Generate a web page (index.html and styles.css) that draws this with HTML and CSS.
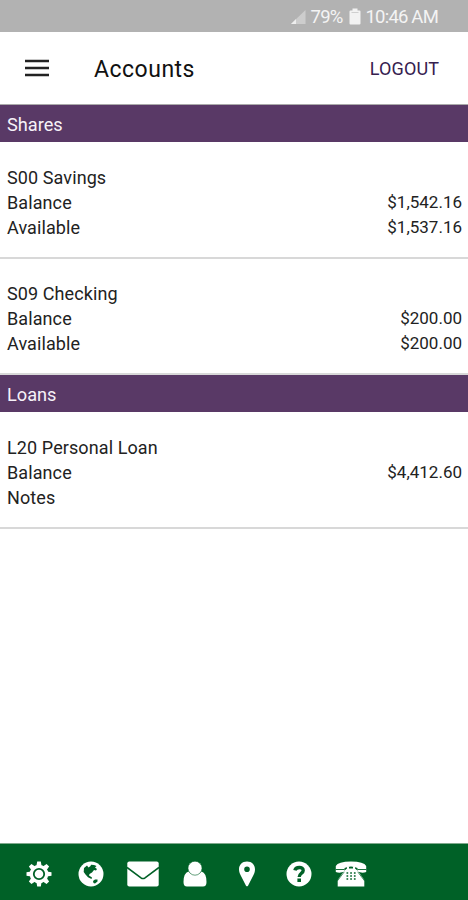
FILE: index.html
```
<!DOCTYPE html>
<html lang="en">
<head>
    <meta charset="utf-8">
    <title>Accounts</title>
    <link rel="stylesheet" href="styles.css">
</head>
<body>
    <div class="app">
        <div class="status-bar">
            <svg class="signal" width="17" height="16" viewBox="0 0 17 16">
                <path d="M1 15 L15.500 1 V15 Z" fill="#cdcdcd"/>
                <path d="M1 15 L6 10 V15 Z" fill="#eee"/>
            </svg>
            <span class="percent">79%</span>
            <svg class="battery" width="12" height="17" viewBox="0 0 12 17">
                <path d="M3.500 0.500 h5 v2 h2 q1 0 1 1 V15.500 q0 1 -1 1 H1.500 q-1 0 -1 -1 V3.500 q0 -1 1 -1 h2 Z" fill="#f2f2f2"/>
                <path d="M2.500 4.500 h7" stroke="#cfcfcf"/>
            </svg>
            <span class="time">10:46 AM</span>
        </div>

        <header class="header">
            <button class="menu-btn" aria-label="Menu">
                <svg width="24" height="18" viewBox="0 0 24 18">
                    <path d="M0 2 H24 M0 9 H24 M0 16 H24" stroke="#222" stroke-width="2.300"/>
                </svg>
            </button>
            <h1 class="title">Accounts</h1>
            <button class="logout-btn">LOGOUT</button>
        </header>

        <main class="content">
            <h2 class="section-title">Shares</h2>
            <div class="account">
                <div class="row"><span class="name">S00 Savings</span></div>
                <div class="row"><span class="balance">Balance</span><span class="amount">$1,542.16</span></div>
                <div class="row"><span class="available">Available</span><span class="amount">$1,537.16</span></div>
            </div>
            <div class="account">
                <div class="row"><span class="name">S09 Checking</span></div>
                <div class="row"><span class="balance">Balance</span><span class="amount">$200.00</span></div>
                <div class="row"><span class="available">Available</span><span class="amount">$200.00</span></div>
            </div>

            <h2 class="section-title">Loans</h2>
            <div class="account">
                <div class="row"><span class="name">L20 Personal Loan</span></div>
                <div class="row"><span class="balance">Balance</span><span class="amount">$4,412.60</span></div>
                <div class="row"><span class="notes">Notes</span></div>
            </div>
        </main>

        <nav class="toolbar">
            <!-- Settings -->
            <a class="tool">
                <svg width="26" height="26" viewBox="0 0 26 26">
                    <g fill="#fff">
                        <circle cx="13" cy="13" r="9.300"/>
                        <path id="tooth" d="M10.400 5 L11.200 0.500 H14.800 L15.600 5 Z M10.400 21 L11.200 25.500 H14.800 L15.600 21 Z"/>
                        <use href="#tooth" transform="rotate(45 13 13)"/>
                        <use href="#tooth" transform="rotate(90 13 13)"/>
                        <use href="#tooth" transform="rotate(135 13 13)"/>
                    </g>
                    <circle cx="13" cy="13" r="5.200" fill="none" stroke="#006127" stroke-width="1.800"/>
                </svg>
            </a>
            <!-- Globe -->
            <a class="tool">
                <svg width="26" height="26" viewBox="0 0 26 26">
                    <circle cx="13" cy="13" r="12.500" fill="#fff"/>
                    <path d="M6 7 L9 4.500 L10.500 6.500 L12.500 5 L13 3.700 L16 4 L18.500 5 L17 6.500 L19 8 L18 9.500 L16 9 L14 11.500 L11.500 13 L11 14.500 L14 16.500 L13.500 18 L10 16.300 L7.500 13.500 L5.700 11 Z" fill="#006127"/>
                    <path d="M15 20 L17 18.500 L19.500 18.500 L19.500 20.500 L17 22.500 L15.500 22 Z" fill="#006127"/>
                </svg>
            </a>
            <!-- Messages -->
            <a class="tool">
                <svg width="32" height="26" viewBox="0 0 32 26">
                    <rect x="0.300" y="0.500" width="31.400" height="25" rx="2" fill="#fff"/>
                    <path d="M0 6.500 L14 16.800 Q16 18.200 18 16.800 L32 6.500" fill="none" stroke="#006127" stroke-width="1.600"/>
                </svg>
            </a>
            <!-- Profile -->
            <a class="tool">
                <svg width="24" height="26" viewBox="0 0 24 26">
                    <path d="M5.500 10.500 Q0.500 12 0.500 21 Q0.500 25.500 4 25.500 H20 Q23.500 25.500 23.500 21 Q23.500 12 18.500 10.500 Q12 17 5.500 10.500 Z" fill="#fff"/>
                    <circle cx="12" cy="7.200" r="7" fill="#fff" stroke="#006127" stroke-width="0.600"/>
                </svg>
            </a>
            <!-- Locations -->
            <a class="tool">
                <svg width="18" height="26" viewBox="0 0 18 26">
                    <path fill-rule="evenodd" d="M9 0.500 C4 0.500 1 4 1 8.500 C1 11 2 13 3 15 L8 24.700 Q9 26 10 24.700 L15 15 C16 13 17 11 17 8.500 C17 4 14 0.500 9 0.500 Z M9 5.400 A2.800 2.800 0 1 1 9 11 A2.800 2.800 0 1 1 9 5.400 Z" fill="#fff"/>
                </svg>
            </a>
            <!-- Help -->
            <a class="tool">
                <svg width="26" height="26" viewBox="0 0 26 26">
                    <circle cx="13" cy="13" r="12.500" fill="#fff"/>
                    <path d="M8.900 9.300 C9.800 5.600 17.200 5.300 17.200 9.500 C17.200 12.300 13.200 12.300 13.200 16" fill="none" stroke="#006127" stroke-width="3.400"/>
                    <rect x="11.400" y="17.500" width="3.600" height="3.500" fill="#006127"/>
                </svg>
            </a>
            <!-- Call us -->
            <a class="tool">
                <svg width="32" height="26" viewBox="0 0 32 26">
                    <path d="M0.800 11 V5 Q3 0.500 16 0.500 T31.200 5 V11 Q27 12.500 22.500 10.500 V7 Q16 4 9.500 7 V10.500 Q5 12.500 0.800 11 Z" fill="#fff"/>
                    <path d="M12 5.500 H14 V7.500 H18 V5.500 H20 V7.500 L23 10 L29.300 19 V25.500 H2.700 V19 L9 10 L12 7.500 Z" fill="#fff"/>
                    <path d="M0.800 8.500 H9.500 M22.500 8.500 H31.200" stroke="#006127" stroke-width="0.900"/>
                    <path d="M9.300 10.800 L2.300 20 M22.700 10.800 L29.700 20" stroke="#006127" stroke-width="0.700"/>
                    <path d="M11.500 12 H13.200 M15.200 12 H16.900 M18.900 12 H20.600 M11.500 15 H13.200 M15.200 15 H16.900 M18.900 15 H20.600 M11.500 18 H13.200 M15.200 18 H16.900 M18.900 18 H20.600" stroke="#006127" stroke-width="1.700"/>
                </svg>
            </a>
        </nav>
    </div>
</body>
</html>
```
FILE: styles.css
```
body {
    margin: 0;
    background: white;
    font-family: Roboto, "Liberation Sans", sans-serif;
    color: #222;
}

.app {
    display: flex;
    flex-direction: column;
    height: 900px;
}

.status-bar {
    box-sizing: border-box;
    height: 32px;
    padding: 1px 30px 0 0;
    display: flex;
    align-items: center;
    justify-content: flex-end;
    background: #b2b2b2;
    color: #f4f4f4;
    font-size: 18.500px;
    letter-spacing: -0.800px;
}

.percent { margin: 0 6px 0 4px; }
.time { margin-left: 5px; }

.header {
    box-sizing: border-box;
    height: 73px;
    padding: 0 29px 0 25px;
    display: flex;
    align-items: center;
    border-bottom: 1px solid #aaa;
}

button {
    padding: 0;
    border: none;
    background: none;
    font-family: inherit;
    cursor: pointer;
}

.menu-btn {
    display: flex;
}

.title {
    margin: 2px 0 0 45px;
    flex: 1;
    color: #111;
    font-size: 23px;
    font-weight: 400;
    letter-spacing: 0.500px;
}

.logout-btn {
    color: #36204f;
    font-size: 18px;
    letter-spacing: 0.100px;
}

.content {
    flex: 1;
}

.section-title {
    box-sizing: border-box;
    height: 37px;
    margin: 0;
    padding: 0 7px;
    background: #593966;
    color: #f6f2f8;
    font-size: 18.200px;
    font-weight: 400;
    line-height: 40px;
}

.account {
    box-sizing: border-box;
    height: 116.500px;
    padding: 22.500px 6px 0 7px;
    border-bottom: 2px solid #d8d8d8;
}

.row {
    display: flex;
    justify-content: space-between;
    font-size: 18px;
    line-height: 25px;
    letter-spacing: 0.100px;
}

.amount {
    font-size: 17px;
    letter-spacing: 0;
}

.toolbar {
    box-sizing: border-box;
    height: 57px;
    padding: 4px 13px 0;
    display: flex;
    align-items: center;
    background: #006127;
    border-top: 1px solid #7fa98c;
}

.tool {
    width: 52px;
    display: flex;
    justify-content: center;
}

.tool svg {
    flex: none;
}
```
